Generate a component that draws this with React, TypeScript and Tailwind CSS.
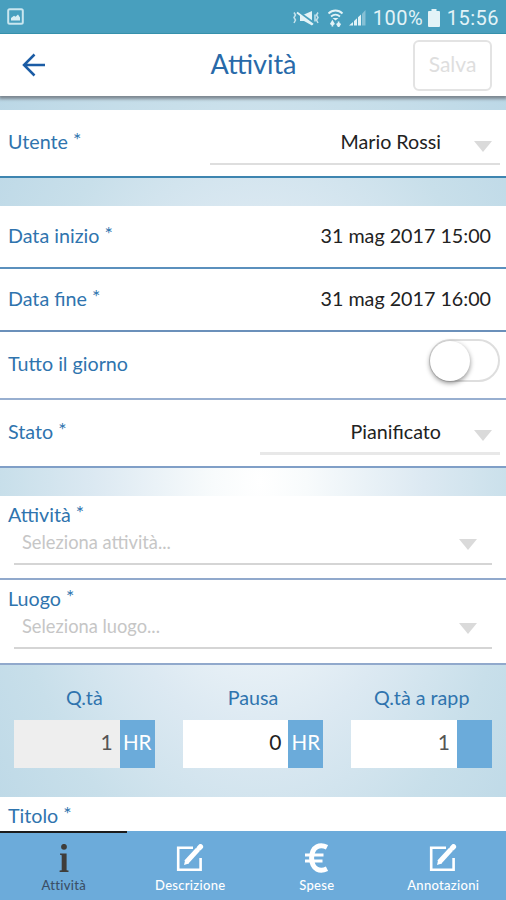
import type { ReactNode } from 'react';

function Caret() {
  return (
    <svg viewBox="0 0 18 11" className="w-[18px] h-[11px] shrink-0" fill="#dadada">
      <path d="M0 0h18L9 11z" />
    </svg>
  );
}

function EditIcon() {
  return (
    <svg viewBox="0 0 28 28" className="w-7 h-7" fill="none" stroke="#fff">
      <path d="M17 3.7H2.2v22.1h22.4V14" strokeWidth="2.6" />
      <path d="M10.2 18.2 22 5.4" strokeWidth="5" />
      <path d="m23.3 4 1.2-1.3" strokeWidth="5.2" strokeLinecap="round" />
      <path d="m8 21 1.2-5 3.6 3.4z" fill="#fff" stroke="none" />
    </svg>
  );
}

function InfoIcon() {
  return (
    <svg viewBox="0 0 10 28" className="w-2.5 h-7" fill="#3f3d3a">
      <circle cx="5" cy="2.8" r="2.9" />
      <path d="M1 9.4h6.6v16.8l1.9.4V28H.6v-1.4l2.1-.4V11.2L1 10.8z" />
    </svg>
  );
}

function EuroIcon() {
  return (
    <svg viewBox="0 0 23 30" className="w-[23px] h-[30px]" fill="none" stroke="#fff">
      <path d="M22 4.2C15.5 1 7 2.5 6.6 15c.4 12.5 9 14 15.4 10.8" strokeWidth="5" />
      <path d="M0 12h18.5M0 18h17.5" strokeWidth="3.2" />
    </svg>
  );
}

function StatusBar() {
  return (
    <div className="h-[34px] shrink-0 flex items-center justify-between bg-[#489fbe] border-b border-[#2793b2] px-[7px] text-[#e3f3f7]">
      <svg viewBox="0 0 17 17" className="w-[17px] h-[17px]">
        <rect x="1.2" y="1.2" width="14.6" height="14.6" rx="1.5" fill="none" stroke="#c9e6ef" strokeWidth="2" />
        <path d="M4 12.500V10l3-2.200 1.500 1L11 6.500l2 3v3z" fill="#d9eef4" />
      </svg>
      <div className="flex items-center pt-[2px] font-['Roboto',sans-serif] text-[20px] leading-none">
        <svg viewBox="0 0 28 18" className="w-7 h-[18px] mr-[7px]" fill="none" stroke="currentColor">
          <path d="M2 3.500 3.500 6 2 8.500 3.500 11 2 14M26 3.500 24.500 6 26 8.500 24.500 11 26 14M23 5.500v7" strokeWidth="1.5" opacity=".8" />
          <path d="M8 5.500h4L20 2v14.500L12 12H8z" fill="currentColor" stroke="none" />
          <path d="m5 2 16 11.500" stroke="#489fbe" strokeWidth="2.5" />
          <path d="m5 3.500 16 12" strokeWidth="1.8" />
        </svg>
        <svg viewBox="0 0 17 18" className="w-[17px] h-[18px] mr-[5px]" fill="none" stroke="currentColor">
          <path d="M1.500 4.500c4-4 10-4 14 0M4 7.500c3-2.500 6-2.500 9 0" strokeWidth="1.8" />
          <path d="M5.500 9h6l-3 2.500z" fill="currentColor" stroke="none" />
          <path d="M5.400 17.500v-5M3.600 15.500l1.800-3 1.800 3M11.600 17.500v-5M9.800 14.500l1.800 3 1.800-3" strokeWidth="1.7" />
        </svg>
        <svg viewBox="0 0 17 17" className="w-[17px] h-[17px] mr-[7px]" fill="currentColor">
          <path d="M0 16.500 4 13v3.500zM5 16.500V12l3-2.700v7.200zM9 16.500V8.300l3-2.700v10.900z" />
          <path d="M13 16.500V4.700L16.500 1v15.500z" opacity=".4" />
        </svg>
        <span className="w-[51px] whitespace-nowrap tracking-[0.5px]">100%</span>
        <svg viewBox="0 0 12 18" className="w-3 h-[18px] ml-[4px] mr-[7px]" fill="currentColor">
          <path d="M3.500 0h5v2H11q1 0 1 1v14q0 1-1 1H1q-1 0-1-1V3q0-1 1-1h2.500z" />
        </svg>
        <span className="tracking-[0.5px]">15:56</span>
      </div>
    </div>
  );
}

function Label({ text, required = false }: { text: string; required?: boolean }) {
  return (
    <span className="text-[#2f74ae]">
      {text}
      {required && <span className="align-[2px] leading-none"> *</span>}
    </span>
  );
}

type RowProps = { label: string; required?: boolean; className: string; children: ReactNode };

function Row({ label, required, className, children }: RowProps) {
  return (
    <div className={`shrink-0 flex justify-between bg-white border-b-2 pl-2 ${className}`}>
      <div className="self-center pb-[2px]">
        <Label text={label} required={required} />
      </div>
      {children}
    </div>
  );
}

function SelectBlock({ label, placeholder, className }: { label: string; placeholder: string; className: string }) {
  return (
    <div className={`shrink-0 bg-white border-b-2 border-[#91a9cc] ${className}`}>
      <div className="h-[25px] pl-2 leading-6">
        <Label text={label} required />
      </div>
      <div className="mx-[14px] h-[37px] flex justify-between border-b-2 border-[#d5d5d5] pl-2 pr-[15px]">
        <span className="text-[18.3px] leading-[29px] text-[#c6c6c6]">{placeholder}</span>
        <span className="pt-[11px]">
          <Caret />
        </span>
      </div>
    </div>
  );
}

const quantities = [
  { label: 'Q.tà', value: '1', unit: 'HR', field: 'bg-[#eeeeee] text-[#555]' },
  { label: 'Pausa', value: '0', unit: 'HR', field: 'bg-white text-[#222]' },
  { label: 'Q.tà a rapp', value: '1', unit: '', field: 'bg-white text-[#555]' },
];

const tabs = [
  { label: 'Attività', icon: <InfoIcon />, active: true },
  { label: 'Descrizione', icon: <EditIcon />, active: false },
  { label: 'Spese', icon: <EuroIcon />, active: false },
  { label: 'Annotazioni', icon: <EditIcon />, active: false },
];

export default function App() {
  return (
    <div className="w-[506px] h-[900px] overflow-hidden flex flex-col font-['Lato',sans-serif] text-[19.7px] leading-6 bg-[radial-gradient(ellipse_390px_600px_at_260px_482px,#ffffff_0%,#f8fbfc_12%,#dce9f2_42%,#c8dfea_66%,#b7d5e5_100%)]">
      <StatusBar />

      <header className="h-[62px] shrink-0 grid grid-cols-3 items-center bg-white pl-[22px] pr-[14px] shadow-[0_2px_3px_1px_#7c8790]">
        <svg viewBox="0 0 24 24" className="w-6 h-6" fill="none" stroke="#1b5ca5" strokeWidth="2.5">
          <path d="M23 12H2M12.500 1.500 2 12l10.500 10.500" />
        </svg>
        <h1 className="text-center text-[27px] text-[#286aa9] pr-[7px] pb-[3px]">Attività</h1>
        <button className="justify-self-end w-[79px] h-[51px] border-2 border-[#e3e3e3] rounded-md text-[21px] text-[#dedede] pb-[3px]">
          Salva
        </button>
      </header>

      <main className="flex-1 min-h-0 flex flex-col pt-[14px]">
        <Row label="Utente" required className="h-[68px] border-[#3e85b0]">
          <div className="w-[290px] h-[55px] mr-[6px] flex justify-end border-b-2 border-[#dedede] pr-2">
            <span className="pt-[20px] mr-[33px] text-[#222]">Mario Rossi</span>
            <span className="pt-[31px]">
              <Caret />
            </span>
          </div>
        </Row>

        <Row label="Data inizio" required className="h-[63px] mt-[28px] border-[#5b90bd]">
          <span className="self-center pr-[15px] pb-[2px] text-[#222]">31 mag 2017 15:00</span>
        </Row>
        <Row label="Data fine" required className="h-[63px] border-[#6b90ba]">
          <span className="self-center pr-[15px] pb-[2px] text-[#222]">31 mag 2017 16:00</span>
        </Row>
        <Row label="Tutto il giorno" className="h-[68px] border-[#98afd0]">
          <button className="w-[71px] h-[43px] mt-[7px] mr-[6px] border-2 border-[#dedede] rounded-full">
            <span className="block w-10 h-10 rounded-full bg-white -ml-px shadow-[0_2px_5px_0_rgba(0,0,0,0.45)]" />
          </button>
        </Row>
        <Row label="Stato" required className="h-[68px] border-[#809fc7]">
          <div className="w-[240px] h-[55px] mr-[6px] flex justify-end border-b-3 border-[#e8e8e8] pr-2">
            <span className="pt-[20px] mr-[33px] text-[#222]">Pianificato</span>
            <span className="pt-[30px]">
              <Caret />
            </span>
          </div>
        </Row>

        <SelectBlock label="Attività" placeholder="Seleziona attività..." className="h-[84px] mt-[28px] pt-[7px]" />
        <SelectBlock label="Luogo" placeholder="Seleziona luogo..." className="h-[85px] pt-[7px]" />

        <div className="h-[132px] shrink-0 grid grid-cols-3 gap-7 pt-[21px] px-[14px]">
          {quantities.map((q) => (
            <div key={q.label} className="text-center">
              <div className="text-[#2f74ae]">{q.label}</div>
              <div className="flex h-12 mt-[10px]">
                <div className={`flex-1 text-right pt-[10px] pr-[7px] text-[21px] ${q.field}`}>{q.value}</div>
                <div className="w-[35px] bg-[#6babda] text-white text-[20.5px] pt-[10px]">{q.unit}</div>
              </div>
            </div>
          ))}
        </div>

        <div className="flex-1 bg-white pl-2 pt-[7px]">
          <Label text="Titolo" required />
        </div>
      </main>

      <nav className="h-[69px] shrink-0 grid grid-cols-4 bg-[#6cabda]">
        {tabs.map((tab) => (
          <div
            key={tab.label}
            className={`flex flex-col items-center border-t-2 pl-px text-[13px] leading-4 ${
              tab.active ? 'border-[#1c1c1c] text-[#3b4f66]' : 'border-transparent text-white'
            }`}
          >
            <div className="h-[34px] mt-[8px] flex items-center">{tab.icon}</div>
            <span className="mt-[2px] font-medium tracking-[0.3px]">{tab.label}</span>
          </div>
        ))}
      </nav>
    </div>
  );
}
